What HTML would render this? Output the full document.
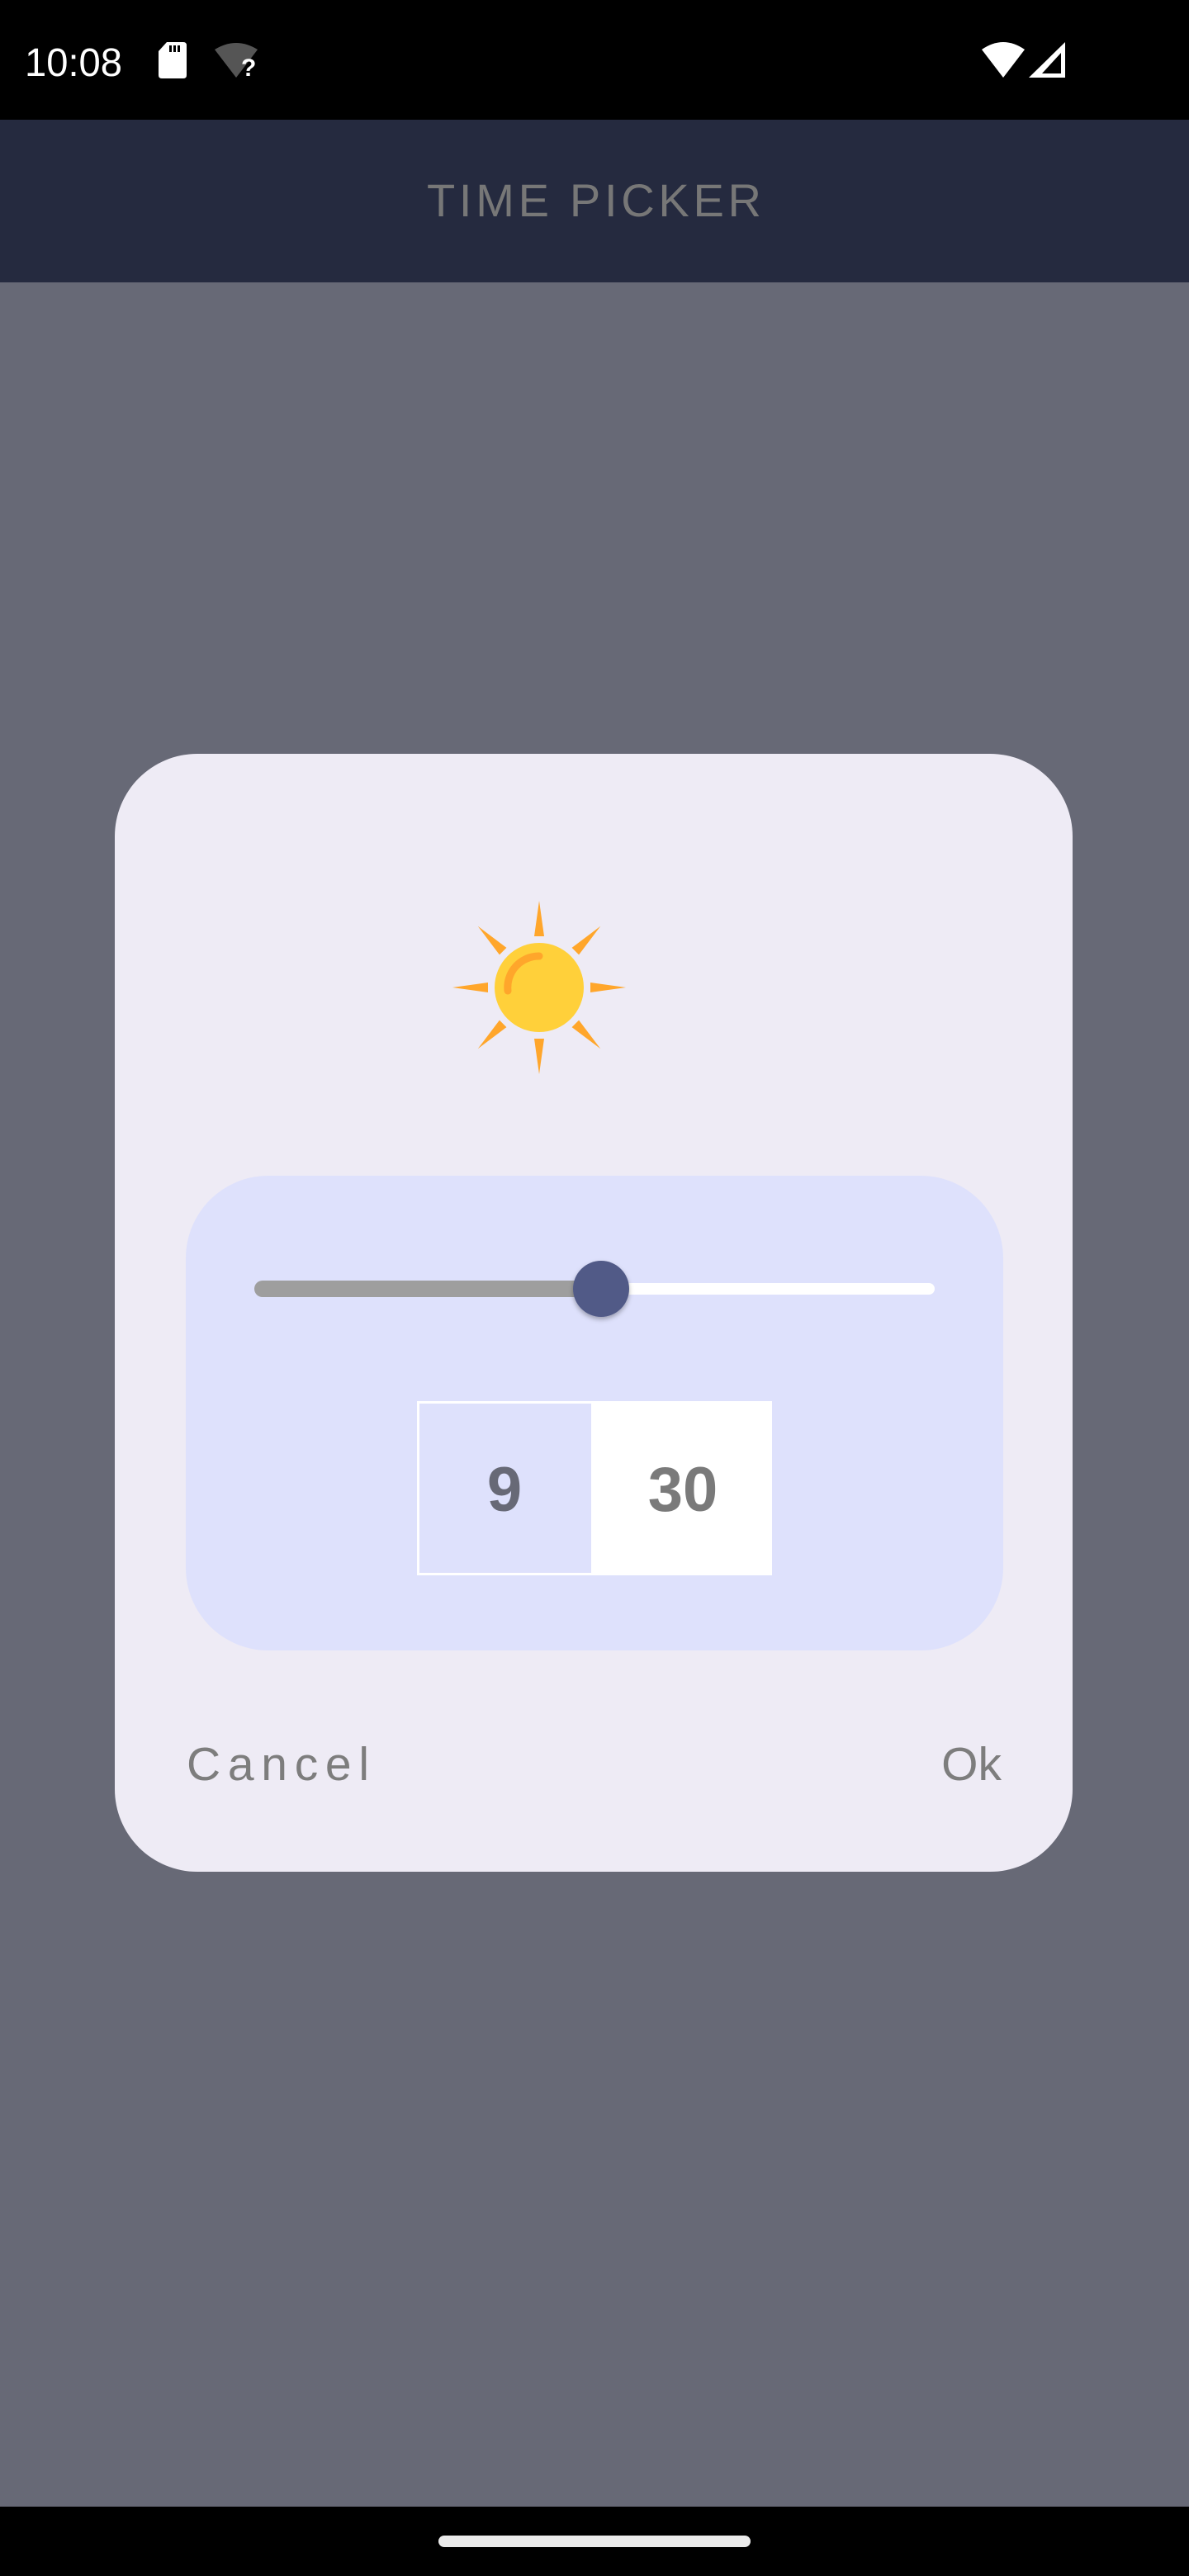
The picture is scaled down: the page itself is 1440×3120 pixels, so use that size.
<!DOCTYPE html>
<html><head><meta charset="utf-8">
<style>
html,body{margin:0;padding:0;background:#676976;}
svg{display:block;}
text{font-family:"Liberation Sans",sans-serif;}
</style></head>
<body>
<svg width="1440" height="3120" viewBox="0 0 1440 3120" xmlns="http://www.w3.org/2000/svg">
  <defs>
    <filter id="sh" x="-50%" y="-50%" width="200%" height="200%">
      <feDropShadow dx="0" dy="3" stdDeviation="3" flood-color="#000" flood-opacity="0.3"/>
    </filter>
  </defs>
  <!-- background -->
  <rect x="0" y="0" width="1440" height="3120" fill="#676976"/>
  <!-- status bar -->
  <rect x="0" y="0" width="1440" height="145" fill="#000"/>
  <text x="30" y="92" font-size="48" fill="#fff" textLength="118" lengthAdjust="spacingAndGlyphs">10:08</text>
  <!-- sd card -->
  <path d="M202 51 H222 Q226 51 226 55 V91 Q226 95 222 95 H196 Q192 95 192 91 V62 Z" fill="#fff"/>
  <rect x="205" y="55" width="3" height="8" fill="#000"/>
  <rect x="210" y="55" width="3" height="8" fill="#000"/>
  <rect x="215" y="55" width="3" height="8" fill="#000"/>
  <!-- wifi unknown -->
  <path d="M260 60 Q286 44 312 60 L286 94 Z" fill="#555"/>
  <text x="292" y="92" font-size="30" font-weight="bold" fill="#fff">?</text>
  <!-- wifi right -->
  <path d="M1189 60 Q1215 42 1241 60 L1215 94 Z" fill="#fff"/>
  <!-- signal -->
  <path d="M1290 51 V94 H1246 Z" fill="#fff"/>
  <path d="M1285 64 V89 H1262 Z" fill="#000"/>
  <!-- app bar -->
  <rect x="0" y="145" width="1440" height="197" fill="#252a3f"/>
  <text x="517" y="262" font-size="56" fill="#777" textLength="405" lengthAdjust="spacing">TIME PICKER</text>

  <!-- dialog -->
  <rect x="139" y="913" width="1160" height="1354" rx="100" fill="#eeebf5"/>

  <!-- sun -->
  <g transform="translate(653,1196)">
    <g fill="#ffa62b">
      <g id="ray"><path d="M0 -105 L6 -62 L-6 -62 Z"/></g>
      <use href="#ray" transform="rotate(45)"/>
      <use href="#ray" transform="rotate(90)"/>
      <use href="#ray" transform="rotate(135)"/>
      <use href="#ray" transform="rotate(180)"/>
      <use href="#ray" transform="rotate(225)"/>
      <use href="#ray" transform="rotate(270)"/>
      <use href="#ray" transform="rotate(315)"/>
    </g>
    <circle cx="0" cy="0" r="54" fill="#ffd03a"/>
    <path d="M-38 4 A38 38 0 0 1 0 -38" fill="none" stroke="#ffa62b" stroke-width="9" stroke-linecap="round"/>
  </g>

  <!-- inner panel -->
  <rect x="225" y="1424" width="990" height="575" rx="100" fill="#dee1fc"/>
  <!-- slider -->
  <rect x="308" y="1551" width="420" height="20" rx="10" fill="#9e9e9e"/>
  <rect x="720" y="1554" width="412" height="14" rx="7" fill="#fff"/>
  <circle cx="728" cy="1561" r="34" fill="#515a87" filter="url(#sh)"/>

  <!-- time boxes -->
  <rect x="717" y="1697" width="218" height="211" fill="#fff"/>
  <rect x="506.5" y="1698.5" width="211" height="208" fill="#dee1fc" stroke="#fff" stroke-width="3"/>
  <text x="611" y="1830" font-size="76" font-weight="bold" fill="#676976" text-anchor="middle">9</text>
  <text x="827" y="1830" font-size="76" font-weight="bold" fill="#7a7a7a" text-anchor="middle">30</text>

  <!-- buttons -->
  <text x="226" y="2156" font-size="57" fill="#7d7d7d" textLength="221" lengthAdjust="spacing">Cancel</text>
  <text x="1213" y="2156" font-size="57" fill="#7d7d7d" text-anchor="end">Ok</text>

  <!-- nav bar -->
  <rect x="0" y="3036" width="1440" height="84" fill="#000"/>
  <rect x="531" y="3071" width="378" height="14" rx="7" fill="#ebebeb"/>
</svg>
</body></html>
